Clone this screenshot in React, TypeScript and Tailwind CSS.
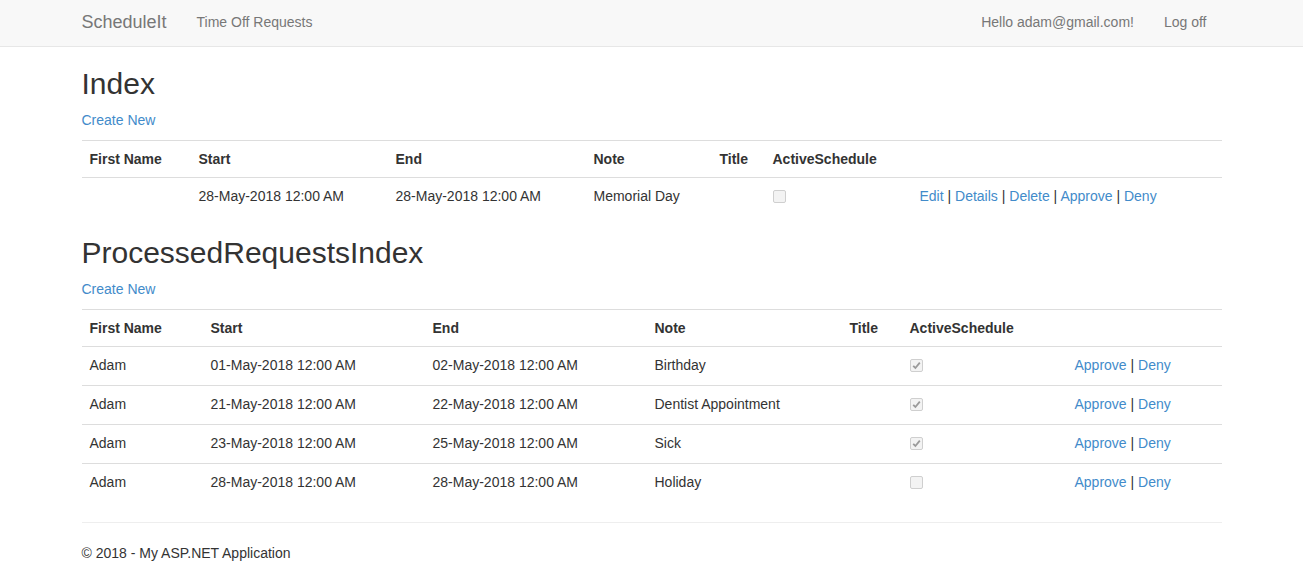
import React from "react";

type Row = { first: string; start: string; end: string; note: string; title: string; active: boolean };

const pending: Row[] = [
  { first: "", start: "28-May-2018 12:00 AM", end: "28-May-2018 12:00 AM", note: "Memorial Day", title: "", active: false },
];

const processed: Row[] = [
  { first: "Adam", start: "01-May-2018 12:00 AM", end: "02-May-2018 12:00 AM", note: "Birthday", title: "", active: true },
  { first: "Adam", start: "21-May-2018 12:00 AM", end: "22-May-2018 12:00 AM", note: "Dentist Appointment", title: "", active: true },
  { first: "Adam", start: "23-May-2018 12:00 AM", end: "25-May-2018 12:00 AM", note: "Sick", title: "", active: true },
  { first: "Adam", start: "28-May-2018 12:00 AM", end: "28-May-2018 12:00 AM", note: "Holiday", title: "", active: false },
];

function Check({ checked }: { checked: boolean }) {
  return (
    <span className="flex h-[13px] w-[13px] items-center justify-center rounded-[2px] border border-[#cfcfcf] bg-[#f3f3f3]">
      {checked && (
        <svg width="9" height="9" viewBox="0 0 9 9">
          <path d="M1.2 4.8 L3.4 7 L7.8 1.6" fill="none" stroke="#9a9a9a" strokeWidth="1.8" />
        </svg>
      )}
    </span>
  );
}

function Actions({ items }: { items: string[] }) {
  return (
    <>
      {items.map((a, i) => (
        <span key={a}>
          {i > 0 && " | "}
          <a href="#" className="text-[#428bca] hover:underline">{a}</a>
        </span>
      ))}
    </>
  );
}

function RequestTable({ rows, widths, actions }: { rows: Row[]; widths: string[]; actions: string[] }) {
  const heads = ["First Name", "Start", "End", "Note", "Title", "ActiveSchedule", ""];
  const td = "border-t border-[#ddd] px-2 pt-2 pb-2 align-top leading-5";
  return (
    <table className="mb-5 w-full table-fixed border-collapse">
      <colgroup>
        {widths.map((w, i) => <col key={i} className={w} />)}
      </colgroup>
      <tbody>
        <tr>
          {heads.map((h, i) => (
            <th key={i} className={`${td} text-left font-bold`}>{h}</th>
          ))}
        </tr>
        {rows.map((r, i) => (
          <tr key={i}>
            <td className={td}>{r.first}</td>
            <td className={td}>{r.start}</td>
            <td className={td}>{r.end}</td>
            <td className={td}>{r.note}</td>
            <td className={td}>{r.title}</td>
            <td className={td}>
              <div className="h-[22px] pt-1"><Check checked={r.active} /></div>
            </td>
            <td className={td}><Actions items={actions} /></td>
          </tr>
        ))}
      </tbody>
    </table>
  );
}

export default function App() {
  return (
    <div className="min-h-[565px] bg-white text-[14px] leading-5 text-[#333]" style={{ fontFamily: '"Liberation Sans", Arial, Helvetica, sans-serif' }}>
      <nav className="h-[47px] border-b border-[#e7e7e7] bg-[#f8f8f8]">
        <div className="mx-auto flex w-[1140px] items-start pt-3">
          <a href="#" className="text-[18px] leading-5 text-[#777]">ScheduleIt</a>
          <a href="#" className="ml-[30px] leading-5 text-[#777]">Time Off Requests</a>
          <div className="ml-auto flex items-start">
            <a href="#" className="leading-5 text-[#777]">Hello adam@gmail.com!</a>
            <a href="#" className="ml-[30px] mr-[15px] leading-5 text-[#777]">Log off</a>
          </div>
        </div>
      </nav>

      <div className="mx-auto w-[1140px]">
        <h2 className="mt-5 mb-[10px] text-[30px] leading-[33px] font-normal">Index</h2>
        <p className="mb-[10px]"><a href="#" className="text-[#428bca]">Create New</a></p>
        <RequestTable
          rows={pending}
          widths={["w-[109px]", "w-[197px]", "w-[198px]", "w-[126px]", "w-[53px]", "w-[147px]", "w-[310px]"]}
          actions={["Edit", "Details", "Delete", "Approve", "Deny"]}
        />

        <h2 className="mb-[10px] text-[30px] leading-[33px] font-normal">ProcessedRequestsIndex</h2>
        <p className="mb-[10px]"><a href="#" className="text-[#428bca]">Create New</a></p>
        <RequestTable
          rows={processed}
          widths={["w-[121px]", "w-[222px]", "w-[222px]", "w-[195px]", "w-[60px]", "w-[165px]", "w-[155px]"]}
          actions={["Approve", "Deny"]}
        />

        <hr className="border-t border-[#eee]" />
        <footer className="pt-5">
          <p>© 2018 - My ASP.NET Application</p>
        </footer>
      </div>
    </div>
  );
}
